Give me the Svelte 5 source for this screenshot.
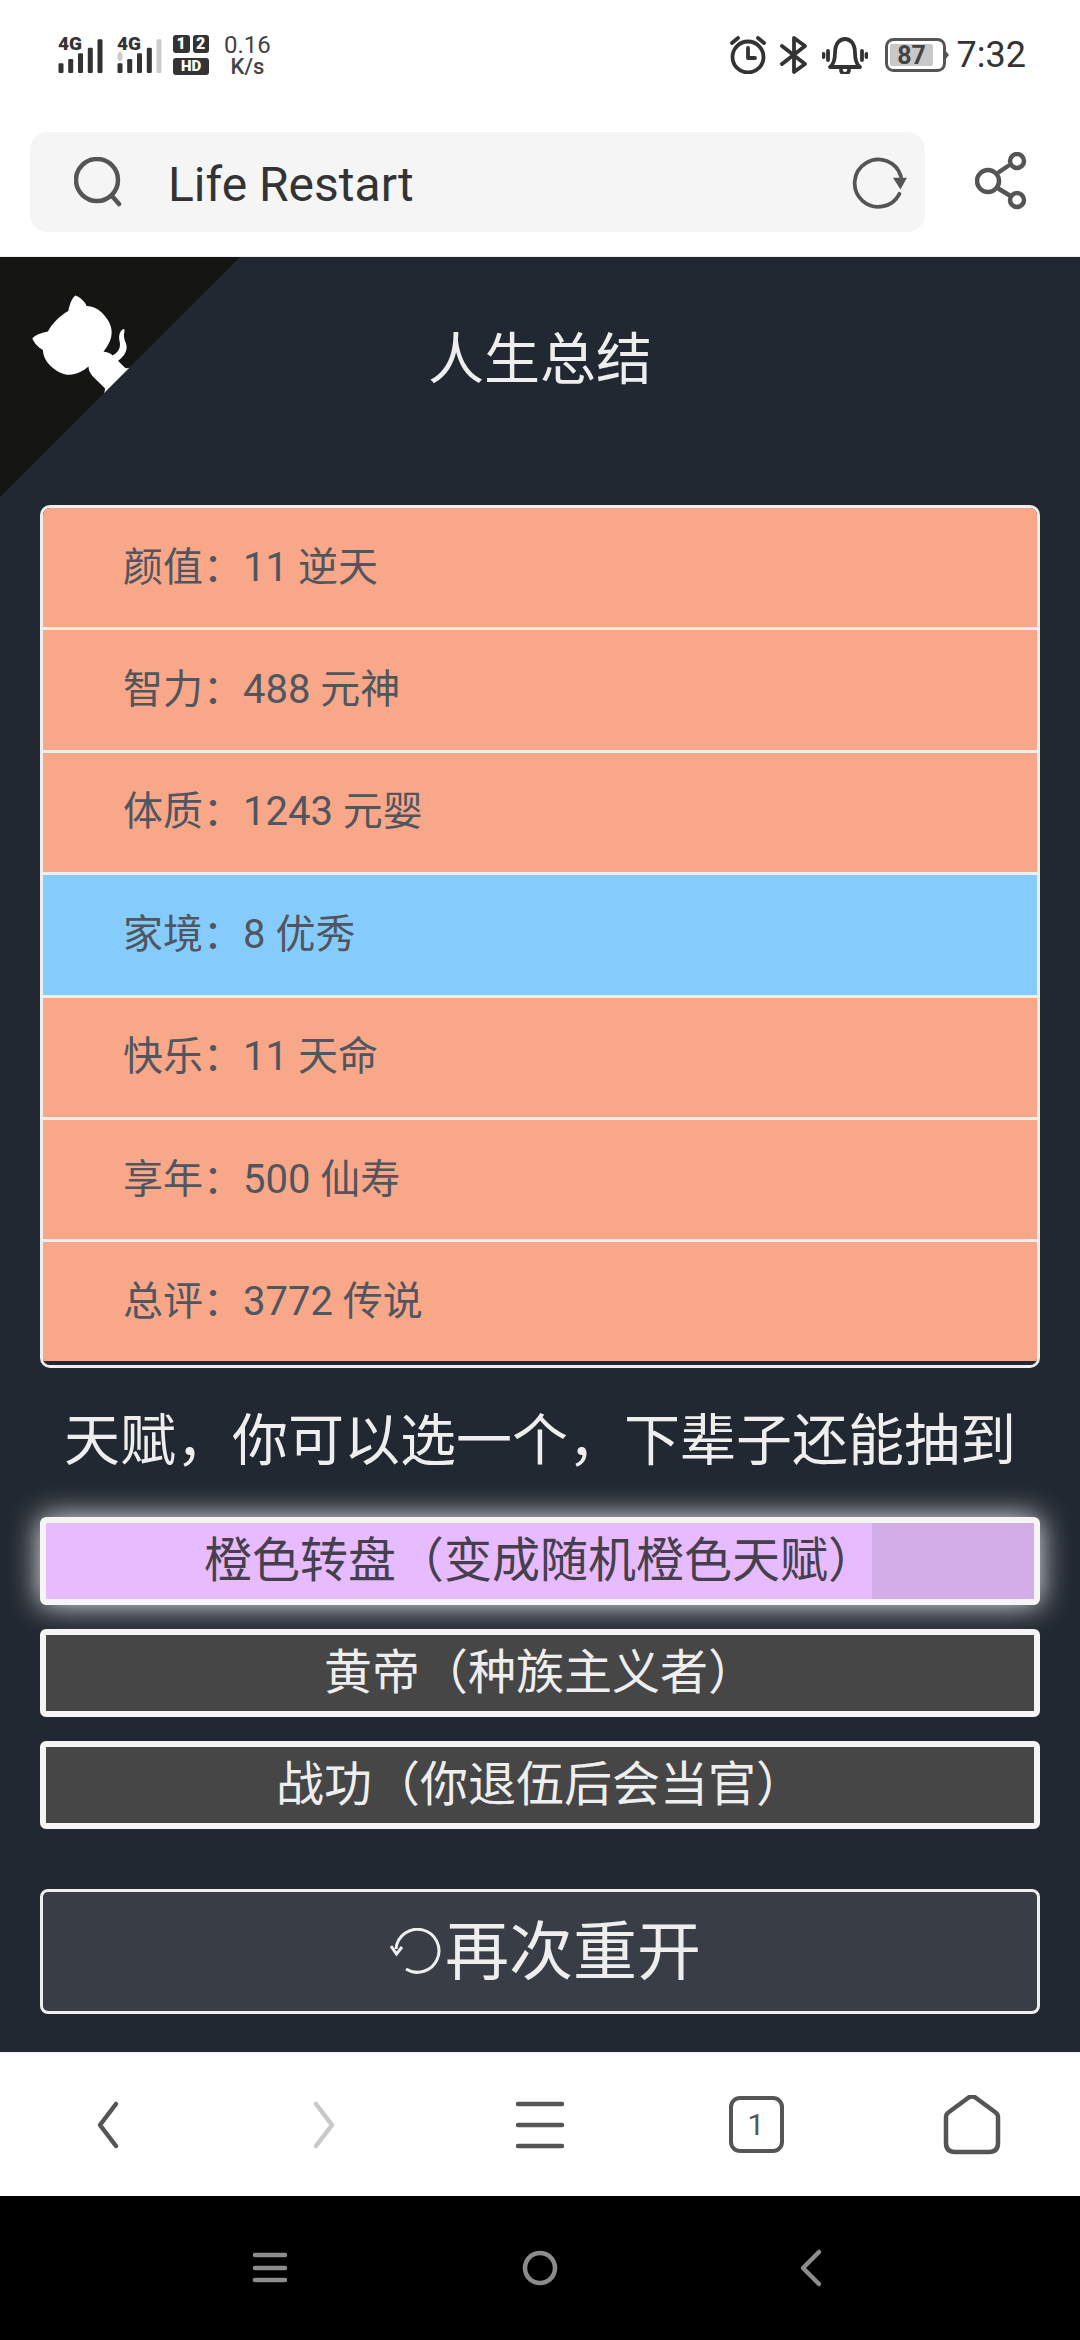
<script>
  const colon = '\uFF1A'
  const rows = [
    { label: '颜值', value: '11 逆天' },
    { label: '智力', value: '488 元神' },
    { label: '体质', value: '1243 元婴' },
    { label: '家境', value: '8 优秀', blue: true },
    { label: '快乐', value: '11 天命' },
    { label: '享年', value: '500 仙寿' },
    { label: '总评', value: '3772 传说' }
  ]
  const talents = ['黄帝\uFF08种族主义者\uFF09', '战功\uFF08你退伍后会当官\uFF09']
  const bars = [
    [0.5, 28.3],
    [10.2, 24],
    [20, 18.3],
    [29.8, 12.7],
    [39.5, 4.3]
  ]
</script>

<div class="phone">
  <div class="status">
    <div class="status-left">
      <div class="sig">
        <svg viewBox="0 0 45 40" width="45" height="40">
          {#each bars as b}
            <rect x={b[0]} y={b[1]} width="5" height={38 - b[1]} rx="1.2" />
          {/each}
        </svg>
        <span>4G</span>
      </div>
      <div class="sig">
        <svg viewBox="0 0 45 40" width="45" height="40">
          <path class="grey" d="M3 16 L5.500 19 V24 L3 27 L.5 24 V19 Z" />
          {#each bars as b, i}
            <rect class={i === 4 ? 'grey' : ''} x={b[0]} y={b[1]} width="5" height={38 - b[1]} rx="1.2" />
          {/each}
        </svg>
        <span>4G</span>
      </div>
      <div class="sim">
        <span>1</span>
        <span>2</span>
        <span class="hd">HD</span>
      </div>
      <div class="speed">
        <span>0.16</span>
        <span class="unit">K/s</span>
      </div>
    </div>
    <div class="status-right">
      <svg class="ico-dark" viewBox="0 0 38 38" width="38" height="38">
        <circle cx="19" cy="21" r="15.500" />
        <path d="M19 12 V22 H26" />
        <path d="M3 7 L9 2 M29 2 L35 7" />
      </svg>
      <svg class="ico-dark" viewBox="0 0 28 38" width="28" height="38">
        <path d="M2 10 L25 28 L14 36 V2 L25 10 L2 28" />
      </svg>
      <svg class="ico-dark bell" viewBox="0 0 46 38" width="46" height="38">
        <path d="M8 31 C12 28 13 24 13 17 C13 7 18 3 23 3 C28 3 33 7 33 17 C33 24 34 28 38 31 Z" />
        <path d="M19 34 a4 4 0 0 0 8 0" />
        <path d="M1.500 18 V21 M6 15 V24 M40 15 V24 M44.500 18 V21" />
      </svg>
      <svg class="batt" viewBox="0 0 64 34" width="64" height="34">
        <rect class="shell" x="1.500" y="1.500" width="58" height="31" rx="7" />
        <rect class="level" x="5" y="6" width="43" height="22" rx="2" />
        <path class="tip" d="M60 12 L64 17 L60 22 Z" />
        <text x="26.500" y="25.500">87</text>
      </svg>
      <span class="clock">7:32</span>
    </div>
  </div>

  <div class="urlrow">
    <div class="urlbar">
      <svg class="ico" viewBox="0 0 48 50" width="48" height="50">
        <circle cx="23" cy="23" r="21" />
        <path d="M38 39 L45 47" />
      </svg>
      <span class="url">Life Restart</span>
      <svg class="ico reload" viewBox="0 0 54 50" width="58" height="54">
        <path d="M46 36 A22 22 0 1 1 47.500 20" />
        <path class="head" d="M40 21 L53 21 L47 32 Z" />
      </svg>
    </div>
    <svg class="ico share" viewBox="0 0 52 60" width="52" height="60">
      <circle cx="13" cy="29" r="11" />
      <circle cx="42" cy="9" r="7" />
      <circle cx="42" cy="48" r="7" />
      <path d="M24 20 L33 14 M24 37 L34 43" />
    </svg>
  </div>

  <main class="game">
    <svg class="corner" viewBox="0 0 250 250" width="240" height="240">
      <path d="M0,0 L115,115 L130,115 L142,142 L250,250 L250,0 Z" fill="#151513" />
      <path fill="#fff" d="M128.3,109.0 C113.8,99.7 119.0,89.6 119.0,89.6 C122.0,82.7 120.5,78.6 120.5,78.6 C119.2,72.0 123.4,76.3 123.4,76.3 C127.3,80.9 125.5,87.3 125.5,87.3 C122.9,97.6 130.6,101.9 134.4,103.2" />
      <path fill="#fff" d="M115.0,115.0 C114.9,115.1 118.7,116.5 119.8,115.4 L133.7,101.6 C136.9,99.2 139.9,98.4 142.2,98.6 C133.8,88.0 127.5,74.4 143.8,58.0 C148.5,53.4 154.0,51.2 159.7,51.0 C160.3,49.4 163.2,43.6 171.4,40.1 C171.4,40.1 176.1,42.5 178.8,56.2 C183.1,58.6 187.2,61.8 190.9,65.4 C194.5,69.0 197.7,73.2 200.1,77.6 C213.8,80.2 216.3,84.9 216.3,84.9 C212.7,93.1 206.9,96.0 205.4,96.6 C205.1,102.4 203.0,107.8 198.3,112.5 C181.9,128.9 168.3,122.5 157.7,114.1 C157.9,116.9 156.7,120.9 152.7,124.9 L141.0,136.5 C139.8,137.7 141.6,141.9 141.8,141.8 Z" />
    </svg>

    <h1>人生总结</h1>

    <ul class="summary">
      {#each rows as row}
        <li class:blue={row.blue}>{row.label}{colon}{row.value}</li>
      {/each}
    </ul>

    <h2>天赋&#xFF0C;你可以选一个&#xFF0C;下辈子还能抽到</h2>

    <div class="talents">
      <button class="talent picked">橙色转盘&#xFF08;变成随机橙色天赋&#xFF09;</button>
      {#each talents as t}
        <button class="talent">{t}</button>
      {/each}
    </div>

    <button class="restart">
      <svg viewBox="0 0 52 46" width="52" height="46">
        <path d="M6 21 A21.500 21.500 0 1 1 16 41" />
        <path d="M1 18 L6.500 26 L12 19" />
      </svg>
      <span>再次重开</span>
    </button>
  </main>

  <nav class="browser-nav">
    <svg class="ico" viewBox="0 0 60 60" width="60" height="60">
      <path d="M38 9 L22 30 L38 51" />
    </svg>
    <svg class="ico off" viewBox="0 0 60 60" width="60" height="60">
      <path d="M22 9 L38 30 L22 51" />
    </svg>
    <svg class="ico" viewBox="0 0 60 60" width="60" height="60">
      <path d="M8 9 H52 M8 30 H52 M8 51 H52" />
    </svg>
    <div class="tabs">1</div>
    <svg class="ico" viewBox="0 0 60 60" width="60" height="60">
      <path d="M4 22 Q4 19 7 17 L26 3 Q30 0 34 3 L53 17 Q56 19 56 22 V48 Q56 57 47 57 H13 Q4 57 4 48 Z" />
    </svg>
  </nav>

  <nav class="system-nav">
    <svg viewBox="0 0 40 40" width="40" height="40">
      <path d="M5 7 H35 M5 20 H35 M5 32 H35" />
    </svg>
    <svg viewBox="0 0 40 40" width="40" height="40">
      <circle cx="20" cy="20" r="15" />
    </svg>
    <svg viewBox="0 0 40 40" width="40" height="40">
      <path d="M29 4 L13 20 L29 36" />
    </svg>
  </nav>
</div>

<style>
  :global(body) {
    margin: 0;
    background: #fff;
  }

  .phone {
    width: 1080px;
    height: 2340px;
    display: flex;
    flex-direction: column;
    font-family: Roboto, "Noto Sans CJK SC", sans-serif;
    overflow: hidden;
  }

  .status {
    height: 110px;
    padding: 0 54px 0 58px;
    display: flex;
    justify-content: space-between;
    align-items: center;
    color: #333;
  }

  .status-left,
  .status-right {
    display: flex;
    align-items: center;
  }

  .status-left { gap: 14px; }
  .status-right { gap: 13px; }

  .sig {
    position: relative;
    width: 45px;
    height: 40px;
  }

  .sig svg { display: block; }
  .sig rect,
  .sig path { fill: #333; }
  .sig .grey { fill: #ccc; }

  .sig span {
    position: absolute;
    left: 0;
    top: 0;
    font-size: 19px;
    line-height: 18px;
    font-weight: 900;
    color: #333;
  }

  .sim {
    display: grid;
    grid-template-columns: 16.500px 16.500px;
    gap: 5px 3px;
    margin-left: -3px;
  }

  .sim span {
    height: 18px;
    background: #333;
    color: #fff;
    border-radius: 3px;
    font-size: 16px;
    font-weight: 900;
    line-height: 18px;
    text-align: center;
  }

  .sim .hd {
    grid-column: 1 / 3;
    height: 17px;
    line-height: 17px;
    font-size: 15px;
  }

  .speed {
    display: flex;
    flex-direction: column;
    align-items: center;
    font-size: 24px;
    line-height: 22px;
    color: #444;
    margin: 2px 0 0 1px;
  }

  .speed .unit {
    font-size: 22px;
    font-weight: 500;
  }

  .ico-dark {
    fill: none;
    stroke: #333;
    stroke-width: 3.8;
    stroke-linecap: round;
    stroke-linejoin: round;
  }

  .bell { margin: 0 4px 0 1px; }

  .batt .shell {
    fill: none;
    stroke: #555;
    stroke-width: 3;
  }
  .batt .level { fill: #c8c8c8; }
  .batt .tip { fill: #555; }
  .batt text {
    font-size: 25px;
    font-weight: 700;
    fill: #444;
    text-anchor: middle;
  }

  .clock {
    font-size: 36px;
    color: #333;
    margin-left: -5px;
  }

  .urlrow {
    height: 147px;
    padding: 22px 53px 0 30px;
    box-sizing: border-box;
    display: flex;
    justify-content: space-between;
    align-items: flex-start;
    border-bottom: 1px solid #eee;
  }

  .urlbar {
    width: 895px;
    height: 100px;
    background: #f5f5f5;
    border-radius: 18px;
    padding: 0 17px 0 44px;
    box-sizing: border-box;
    display: flex;
    align-items: center;
  }

  .url {
    flex: 1;
    margin-left: 46px;
    font-size: 48px;
    color: #333;
    position: relative;
    top: 2px;
  }

  .ico {
    fill: none;
    stroke: #555;
    stroke-width: 4.5;
    stroke-linecap: round;
    stroke-linejoin: round;
    flex-shrink: 0;
  }

  .ico.off { stroke: #c8c8c8; }
  .reload { stroke-width: 3.5; }
  .reload .head {
    fill: #555;
    stroke: none;
  }
  .share { margin-top: 20px; }

  .game {
    flex: 1;
    background: #222831;
    padding: 63px 40px 0;
    position: relative;
    color: #eee;
  }

  .corner {
    position: absolute;
    left: 0;
    top: 0;
    transform: scaleX(-1);
  }

  h1 {
    margin: 0 0 105px;
    font-size: 56px;
    line-height: 80px;
    font-weight: 400;
    text-align: center;
  }

  .summary {
    list-style: none;
    margin: 0;
    padding: 0;
    border: 3px solid #eee;
    border-radius: 10px;
    overflow: hidden;
  }

  .summary li {
    height: 122.4px;
    box-sizing: border-box;
    padding: 0 0 8px 80px;
    display: flex;
    align-items: center;
    background: #f8a888;
    color: #50555f;
    font-size: 40px;
    border-bottom: 3px solid #eee;
  }

  .summary li.blue { background: #85ccfc; }
  .summary li:last-child { border-bottom: 4px solid #222831; }

  h2 {
    margin: 33px 0 36px;
    font-size: 56px;
    line-height: 80px;
    font-weight: 400;
    text-align: center;
    white-space: nowrap;
  }

  .talents {
    display: flex;
    flex-direction: column;
    gap: 24px;
  }

  button {
    font-family: inherit;
    padding: 0;
    cursor: pointer;
  }

  .talent {
    height: 88px;
    box-sizing: border-box;
    border: 6px solid #f5f5f5;
    border-radius: 6px;
    background: #464646;
    color: #eee;
    font-size: 48px;
    line-height: 48px;
  }

  .talent.picked {
    background: linear-gradient(90deg, #e6bbff 826px, #d2ade8 826px);
    color: #46404c;
    box-shadow: 0 0 30px #eee;
  }

  .restart {
    margin-top: 60px;
    width: 100%;
    height: 125px;
    border: 3px solid #eee;
    border-radius: 8px;
    background: #393e46;
    color: #eee;
    font-size: 64px;
    display: flex;
    justify-content: center;
    align-items: center;
    gap: 3px;
    padding: 0 0 0 11px;
  }

  .restart span { margin-bottom: 10px; }

  .restart svg {
    fill: none;
    stroke: #eee;
    stroke-width: 3;
  }

  .browser-nav {
    height: 144px;
    background: #fff;
    border-top: 1px solid #eee;
    box-sizing: border-box;
    display: grid;
    grid-template-columns: repeat(5, 1fr);
    justify-items: center;
    align-items: center;
  }

  .tabs {
    width: 55px;
    height: 57px;
    box-sizing: border-box;
    border: 4.5px solid #555;
    border-radius: 11px;
    display: flex;
    justify-content: center;
    align-items: center;
    color: #555;
    font-size: 30px;
  }

  .system-nav {
    height: 144px;
    background: #000;
    display: grid;
    grid-template-columns: repeat(3, 270px);
    justify-content: center;
    justify-items: center;
    align-items: center;
  }

  .system-nav svg {
    fill: none;
    stroke: #8c8c8c;
    stroke-width: 4.5;
    stroke-linecap: round;
    stroke-linejoin: round;
  }
</style>
